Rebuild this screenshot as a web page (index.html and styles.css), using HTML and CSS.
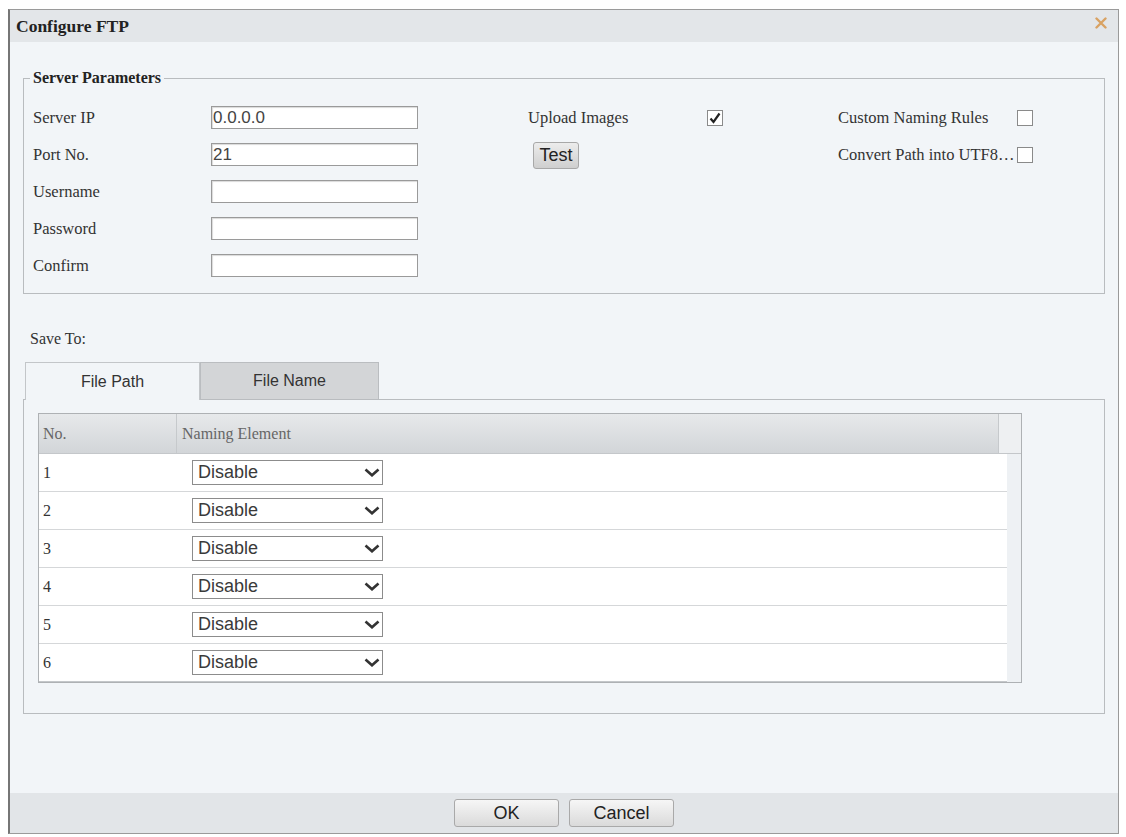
FILE: index.html
```html
<!DOCTYPE html>
<html>
<head>
<meta charset="utf-8">
<title>Configure FTP</title>
<link rel="stylesheet" href="styles.css">
</head>
<body>
<div class="dialog">
  <div class="titlebar">
    <span class="title">Configure FTP</span>
    <span class="close"><svg width="12" height="12" viewBox="0 0 12 12"><path d="M1.5 1.5 L10.5 10.5 M10.5 1.5 L1.5 10.5" stroke="#d9a263" stroke-width="2.4" stroke-linecap="round"/></svg></span>
  </div>
  <div class="content">
    <fieldset class="server">
      <legend>Server Parameters</legend>
      <div class="grid">
        <div class="lbl c1">Server IP</div>
        <input class="inp c2" type="text" value="0.0.0.0">
        <div class="lbl c4">Upload Images</div>
        <div class="cb c5"><svg width="14" height="14" viewBox="0 0 14 14"><path d="M2.5 7.5 L5.5 11 L11.5 2.5" fill="none" stroke="#222" stroke-width="2.2"/></svg></div>
        <div class="lbl c7">Custom Naming Rules</div>
        <div class="cb c8"></div>

        <div class="lbl c1">Port No.</div>
        <input class="inp c2" type="text" value="21">
        <div class="c4"><button class="test">Test</button></div>
        <div class="lbl c7 nowrap">Convert Path into UTF8…</div>
        <div class="cb c8"></div>

        <div class="lbl c1">Username</div>
        <input class="inp c2" type="text" value="">

        <div class="lbl c1">Password</div>
        <input class="inp c2" type="password" value="">

        <div class="lbl c1">Confirm</div>
        <input class="inp c2" type="password" value="">
      </div>
    </fieldset>

    <div class="saveto">Save To:</div>

    <div class="tabs">
      <div class="tab active">File Path</div>
      <div class="tab inactive">File Name</div>
    </div>
    <div class="panel">
      <div class="table">
        <div class="thead">
          <div class="th no">No.</div>
          <div class="th name">Naming Element</div>
          <div class="th scroll"></div>
        </div>
        <div class="tbody">
          <div class="rows">
            <div class="row"><div class="num">1</div><div class="select"><span>Disable</span><svg width="16" height="9" viewBox="0 0 16 9"><path d="M1.5 1.5 L8 7.3 L14.5 1.5" fill="none" stroke="#333" stroke-width="2.6"/></svg></div></div>
            <div class="row"><div class="num">2</div><div class="select"><span>Disable</span><svg width="16" height="9" viewBox="0 0 16 9"><path d="M1.5 1.5 L8 7.3 L14.5 1.5" fill="none" stroke="#333" stroke-width="2.6"/></svg></div></div>
            <div class="row"><div class="num">3</div><div class="select"><span>Disable</span><svg width="16" height="9" viewBox="0 0 16 9"><path d="M1.5 1.5 L8 7.3 L14.5 1.5" fill="none" stroke="#333" stroke-width="2.6"/></svg></div></div>
            <div class="row"><div class="num">4</div><div class="select"><span>Disable</span><svg width="16" height="9" viewBox="0 0 16 9"><path d="M1.5 1.5 L8 7.3 L14.5 1.5" fill="none" stroke="#333" stroke-width="2.6"/></svg></div></div>
            <div class="row"><div class="num">5</div><div class="select"><span>Disable</span><svg width="16" height="9" viewBox="0 0 16 9"><path d="M1.5 1.5 L8 7.3 L14.5 1.5" fill="none" stroke="#333" stroke-width="2.6"/></svg></div></div>
            <div class="row last"><div class="num">6</div><div class="select"><span>Disable</span><svg width="16" height="9" viewBox="0 0 16 9"><path d="M1.5 1.5 L8 7.3 L14.5 1.5" fill="none" stroke="#333" stroke-width="2.6"/></svg></div></div>
          </div>
          <div class="gutter"></div>
        </div>
      </div>
    </div>
  </div>
  <div class="footer">
    <button class="btn">OK</button>
    <button class="btn">Cancel</button>
  </div>
</div>
</body>
</html>
```

FILE: styles.css
```css
html, body {
  margin: 0;
  padding: 0;
  background: #ffffff;
}

.dialog {
  margin: 9px 0 0 8px;
  width: 1111px;
  height: 825px;
  box-sizing: border-box;
  border: 1px solid #9a9a9a;
  border-left: 2px solid #767676;
  background: #f2f5f8;
  display: flex;
  flex-direction: column;
  font-family: "Liberation Serif", "Times New Roman", serif;
  color: #333333;
}

.titlebar {
  flex: none;
  height: 32px;
  background: #e3e6e9;
  display: flex;
  align-items: center;
  padding-left: 6px;
}

.title {
  font-weight: bold;
  font-size: 17.5px;
  color: #222222;
}

.close {
  margin-left: auto;
  margin-right: 11px;
  margin-top: -6px;
  display: flex;
}

.content {
  flex: 1;
  padding: 27px 13px 0 13px;
}

.server {
  margin: 0;
  padding: 12px 0 9px 9px;
  border: 1px solid #b9bcbf;
  min-width: 0;
}

.server legend {
  padding: 0 3px;
  margin-left: -3px;
  font-weight: bold;
  font-size: 16px;
  line-height: 18px;
  color: #222222;
}

.grid {
  display: grid;
  grid-template-columns: 178px 207px 110px 179px 16px 115px 179px 16px;
  grid-auto-rows: 37px;
  align-items: center;
}

.c1 { grid-column: 1; }
.c2 { grid-column: 2; }
.c4 { grid-column: 4; }
.c5 { grid-column: 5; }
.c7 { grid-column: 7; }
.c8 { grid-column: 8; }

.lbl {
  font-size: 16.5px;
  line-height: 20px;
  color: #333333;
}

.nowrap {
  white-space: nowrap;
}

.inp {
  width: 207px;
  height: 23px;
  box-sizing: border-box;
  margin: 0;
  border: 1px solid #9a9a9a;
  background: #ffffff;
  font-family: "Liberation Sans", Arial, sans-serif;
  font-size: 17px;
  color: #444444;
  padding: 0 1px;
  box-shadow: inset 1px 1px 1px rgba(0, 0, 0, 0.15);
  outline: none;
}

.cb {
  width: 16px;
  height: 16px;
  box-sizing: border-box;
  border: 1px solid #8a8a8a;
  background: #ffffff;
  display: flex;
  align-items: center;
  justify-content: center;
}

.test {
  margin-left: 5px;
  width: 46px;
  height: 27px;
  padding: 0;
  border: 1px solid #a8a8a8;
  border-radius: 3px;
  background: linear-gradient(#ececec, #cfcfcf);
  font-family: "Liberation Sans", Arial, sans-serif;
  font-size: 18px;
  color: #222222;
  display: block;
  margin-top: 1px;
}

.saveto {
  margin-top: 35px;
  padding-left: 7px;
  font-size: 16px;
  line-height: 20px;
  color: #333333;
}

.tabs {
  margin-top: 13px;
  display: flex;
  height: 37px;
  padding-left: 2px;
}

.tab {
  box-sizing: border-box;
  display: flex;
  align-items: center;
  justify-content: center;
  font-family: "Liberation Sans", Arial, sans-serif;
  font-size: 16px;
  color: #333333;
  border: 1px solid #c3c6c9;
  border-bottom: none;
}

.tab.active {
  width: 175px;
  height: 38px;
  background: #f2f5f8;
  position: relative;
  z-index: 1;
}

.tab.inactive {
  width: 179px;
  height: 37px;
  background: #d3d5d7;
  border-color: #babdc0;
}

.panel {
  border: 1px solid #b9bcbf;
  padding: 13px 0 30px 14px;
}

.table {
  width: 984px;
  box-sizing: border-box;
  border: 1px solid #aeb1b4;
  background: #eef1f4;
}

.thead {
  display: flex;
  height: 40px;
  box-sizing: border-box;
  border-bottom: 1px solid #c4c7ca;
}

.th {
  box-sizing: border-box;
  display: flex;
  align-items: center;
  background: linear-gradient(#e7e9eb, #d2d5d8);
  font-size: 16px;
  color: #666666;
}

.th.no {
  width: 137px;
  padding-left: 4px;
}

.th.name {
  width: 822px;
  padding-left: 5px;
  border-left: 1px solid #c6c9cc;
}

.th.scroll {
  flex: 1;
  background: #eef0f2;
  border-left: 1px solid #c6c9cc;
}

.tbody {
  display: flex;
}

.rows {
  width: 968px;
  background: #ffffff;
}

.gutter {
  flex: 1;
  background: #eef1f4;
}

.row {
  height: 38px;
  box-sizing: border-box;
  border-bottom: 1px solid #d5d7d9;
  display: flex;
  align-items: center;
}

.row.last {
  border-bottom-color: #c4c7ca;
}

.num {
  width: 137px;
  box-sizing: border-box;
  padding-left: 4px;
  font-size: 16px;
  color: #333333;
}

.select {
  margin-left: 16px;
  width: 191px;
  height: 25px;
  box-sizing: border-box;
  border: 1px solid #8c8c8c;
  background: #ffffff;
  display: flex;
  align-items: center;
  justify-content: space-between;
  padding: 0 2px 0 5px;
  font-family: "Liberation Sans", Arial, sans-serif;
  font-size: 18px;
  color: #3a3a3a;
}

.footer {
  flex: none;
  height: 40px;
  background: #e2e5e8;
  display: flex;
  align-items: center;
  justify-content: center;
  gap: 10px;
}

.btn {
  width: 105px;
  height: 28px;
  padding: 0;
  border: 1px solid #a9a9a9;
  border-radius: 3px;
  background: linear-gradient(#f6f6f6, #dadada);
  font-family: "Liberation Sans", Arial, sans-serif;
  font-size: 18px;
  color: #222222;
}
```
